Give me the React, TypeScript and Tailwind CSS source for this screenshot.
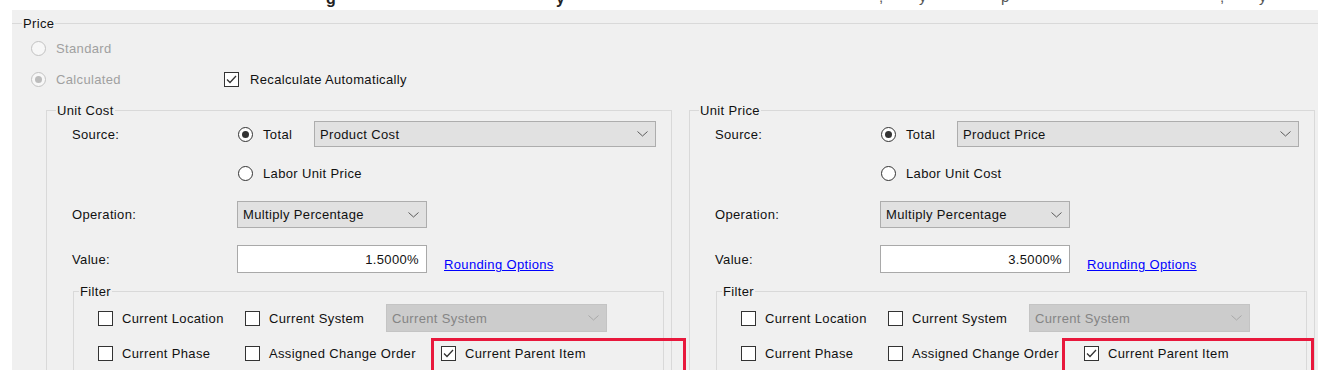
import React from 'react';

type Side = {
  title: string;
  source: string;
  labor: string;
  value: string;
  redLeft: string;
  redWidth: string;
};

const SIDES: Side[] = [
  { title: 'Unit Cost', source: 'Product Cost', labor: 'Labor Unit Price', value: '1.5000%', redLeft: 'left-[-10px]', redWidth: 'w-[255px]' },
  { title: 'Unit Price', source: 'Product Price', labor: 'Labor Unit Cost', value: '3.5000%', redLeft: 'left-[-22px]', redWidth: 'w-[252px]' },
];

function Chevron({ disabled }: { disabled?: boolean }) {
  return (
    <svg width="11" height="6" viewBox="0 0 11 6" className="shrink-0">
      <path d="M0.5 0.5 L5.5 5 L10.5 0.5" fill="none" stroke={disabled ? '#a8a8a8' : '#5a5a5a'} strokeWidth="1" />
    </svg>
  );
}

function Radio({ checked, disabled }: { checked?: boolean; disabled?: boolean }) {
  return (
    <span
      className={
        'w-[15px] h-[15px] rounded-full border flex items-center justify-center shrink-0 ' +
        (disabled ? 'border-[#c2c2c2] bg-[#f7f7f7]' : 'border-[#333333] bg-white')
      }
    >
      {checked && <span className={'w-[7px] h-[7px] rounded-full ' + (disabled ? 'bg-[#bcbcbc]' : 'bg-[#333333]')} />}
    </span>
  );
}

function Checkbox({ checked }: { checked?: boolean }) {
  return (
    <span className="w-[15px] h-[15px] border border-[#333333] bg-white flex items-center justify-center shrink-0">
      {checked && (
        <svg width="11" height="9" viewBox="0 0 11 9">
          <path d="M1 4.5 L4 7.5 L10 1" fill="none" stroke="#333333" strokeWidth="1.3" />
        </svg>
      )}
    </span>
  );
}

function Check({ label, checked, className = '' }: { label: string; checked?: boolean; className?: string }) {
  return (
    <div className={'flex items-center gap-[9px] shrink-0 ' + className}>
      <Checkbox checked={checked} />
      <span className="whitespace-nowrap">{label}</span>
    </div>
  );
}

function Dropdown({ value, className = '', disabled }: { value: string; className?: string; disabled?: boolean }) {
  return (
    <div
      className={
        'flex items-center justify-between border pl-[5px] pr-[7px] shrink-0 ' +
        (disabled ? 'bg-[#cccccc] border-[#c4c4c4] text-[#858585] ' : 'bg-[#e1e1e1] border-[#adadad] ') +
        className
      }
    >
      <span className="whitespace-nowrap">{value}</span>
      <Chevron disabled={disabled} />
    </div>
  );
}

function GroupBox({ label, labelLeft, className = '', children }: { label: string; labelLeft: string; className?: string; children: React.ReactNode }) {
  return (
    <div className={'relative border border-b-0 border-[#d9d9d9] shrink-0 ' + className}>
      <span className={'absolute top-[-8px] bg-[#f0f0f0] px-[1px] whitespace-nowrap ' + labelLeft}>{label}</span>
      {children}
    </div>
  );
}

function UnitGroup({ side }: { side: Side }) {
  return (
    <GroupBox label={side.title} labelLeft="left-[9px]" className="w-[626px] h-[300px]">
      <div className="flex flex-col pl-[25px]">
        <div className="mt-[10px] h-[26px] flex items-center">
          <span className="w-[166px] shrink-0">Source:</span>
          <div className="w-[76px] flex items-center gap-[10px] shrink-0">
            <Radio checked />
            <span>Total</span>
          </div>
          <Dropdown value={side.source} className="w-[342px] h-[26px]" />
        </div>
        <div className="mt-[16px] h-[20px] flex items-center gap-[10px] pl-[166px]">
          <Radio />
          <span className="whitespace-nowrap">{side.labor}</span>
        </div>
        <div className="mt-[18px] h-[27px] flex items-center">
          <span className="w-[165px] shrink-0">Operation:</span>
          <Dropdown value="Multiply Percentage" className="w-[190px] h-[27px]" />
        </div>
        <div className="mt-[17px] h-[28px] flex items-end">
          <span className="w-[165px] shrink-0 self-center">Value:</span>
          <div className="w-[190px] h-[28px] bg-white border border-[#a9a9a9] flex items-center justify-end pr-[7px] shrink-0">
            {side.value}
          </div>
          <a className="ml-[17px] mb-[1px] text-[#0000ff] underline whitespace-nowrap cursor-pointer">Rounding Options</a>
        </div>
        <GroupBox label="Filter" labelLeft="left-[5px]" className="mt-[18px] ml-[1px] w-[591px] h-[100px]">
          <div className="flex flex-col pl-[24px]">
            <div className="mt-[12px] h-[28px] flex items-center">
              <Check label="Current Location" className="w-[147px]" />
              <Check label="Current System" className="w-[141px]" />
              <Dropdown value="Current System" disabled className="w-[221px] h-[28px]" />
            </div>
            <div className="mt-[11px] h-[20px] flex items-center">
              <Check label="Current Phase" className="w-[147px]" />
              <Check label="Assigned Change Order" className="w-[196px]" />
              <div className="relative">
                <Check label="Current Parent Item" checked />
                <span className={'absolute top-[-8px] h-[36px] border-[3px] border-[#e8183c] ' + side.redLeft + ' ' + side.redWidth} />
              </div>
            </div>
          </div>
        </GroupBox>
      </div>
    </GroupBox>
  );
}

export default function App() {
  return (
    <div className="w-[1334px] h-[382px] bg-white overflow-hidden font-['Liberation_Sans',Arial,sans-serif] text-[13px] leading-[15px] tracking-[0.35px] text-[#111111]">
      {/* caption above the screenshot, cropped so only descenders show */}
      <div className="h-[10px] overflow-hidden flex text-[#222222]">
        <span className="ml-[326px] w-[230px] -mt-[11px] font-bold text-[16px] leading-[20px]">g</span>
        <span className="w-[323px] -mt-[11px] font-bold text-[16px] leading-[20px]">y</span>
        <span className="w-[40px] -mt-[13px] text-[15px] leading-[20px] text-[#555555]">,</span>
        <span className="w-[82px] -mt-[13px] text-[15px] leading-[20px] text-[#555555]">y</span>
        <span className="w-[219px] -mt-[13px] text-[15px] leading-[20px] text-[#555555]">p</span>
        <span className="w-[39px] -mt-[13px] text-[15px] leading-[20px] text-[#555555]">,</span>
        <span className="-mt-[13px] text-[15px] leading-[20px] text-[#555555]">y</span>
      </div>
      <div className="ml-[12px] w-[1306px] h-[360px] bg-[#f0f0f0] overflow-hidden">
        <div className="mt-[13px] relative border-t border-[#d9d9d9] h-[400px]">
          <span className="absolute left-[10px] top-[-8px] bg-[#f0f0f0] px-[1px]">Price</span>
          <div className="mt-[14px] h-[20px] pl-[19px] flex items-center gap-[10px] text-[#a0a0a0]">
            <Radio disabled />
            <span>Standard</span>
          </div>
          <div className="mt-[11px] h-[20px] pl-[19px] flex items-center">
            <div className="w-[193px] flex items-center gap-[10px] text-[#a0a0a0] shrink-0">
              <Radio checked disabled />
              <span>Calculated</span>
            </div>
            <div className="flex items-center gap-[11px]">
              <Checkbox checked />
              <span>Recalculate Automatically</span>
            </div>
          </div>
          <div className="mt-[21px] pl-[34px] flex gap-[17px]">
            {SIDES.map((s) => (
              <UnitGroup key={s.title} side={s} />
            ))}
          </div>
        </div>
      </div>
    </div>
  );
}
